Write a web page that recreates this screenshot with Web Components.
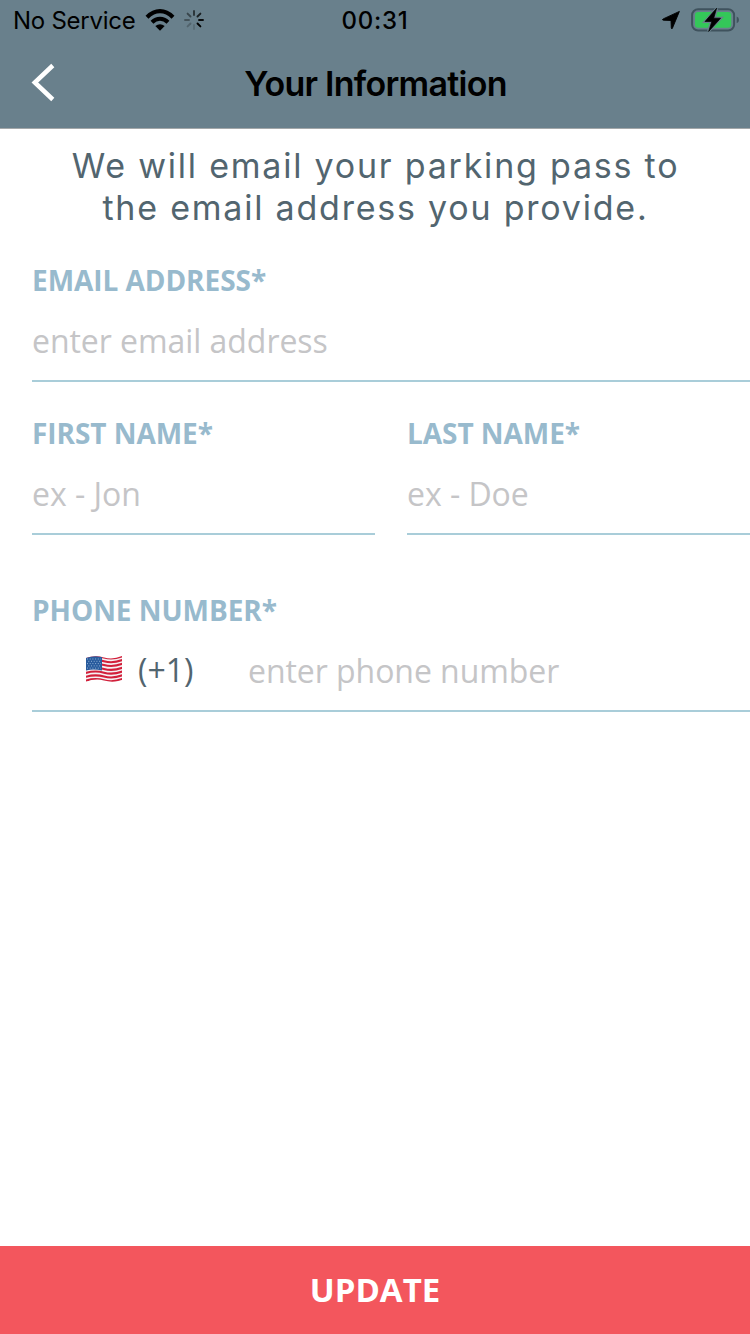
<!DOCTYPE html>
<html lang="en">
<head>
<meta charset="utf-8">
<title>Your Information</title>
<style>
html,body{margin:0;height:100%;background:#fff}
</style>
</head>
<body>
<info-screen></info-screen>
<script>
const define = (name, html) => customElements.define(name, class extends HTMLElement {
  constructor() {
    super();
    const t = document.createElement('template');
    t.innerHTML = html;
    this.attachShadow({mode: 'open'}).append(t.content.cloneNode(true));
  }
});

define('status-bar', `
<style>
:host{display:grid;grid-template-columns:1fr auto 1fr;height:40px;align-items:center;font:400 24px/42px Inter,sans-serif;color:#000}
.l,.r{display:flex;align-items:center;height:40px}
.l{padding-left:13px}
.r{justify-content:flex-end;padding-right:11px}
.s{letter-spacing:-.25px;width:132px;white-space:nowrap}
.t{font-weight:500;letter-spacing:.7px}
svg{display:block;flex:none;margin-bottom:2px}
.r svg+svg{margin-left:11px}
</style>
<div class="l"><span class="s">No Service</span>
<svg width="30" height="24" viewBox="0 0 30 24"><g fill="none" stroke="#000" stroke-width="4.1"><path d="M2 9.2Q8 3.1 15 3.1T28 9.2"/><path d="M7 14.2Q10.600 10.700 15 10.700T23 14.200"/></g><path d="M10.300 18Q15 14.300 19.700 18L15 22.800Z"/></svg>
<svg style="margin-left:9px" width="20" height="22" viewBox="-10 -11 20 22"><g stroke-width="1.900" stroke-linecap="round" stroke="#000"><path d="M0-5V-9" opacity=".6"/><path d="M3.500-3.500L6.400-6.400" opacity=".75"/><path d="M5 0H9" opacity=".9"/><path d="M3.500 3.500L6.400 6.400"/><path d="M0 5V9" opacity=".14"/><path d="M-3.500 3.500L-6.400 6.400" opacity=".22"/><path d="M-5 0H-9" opacity=".35"/><path d="M-3.500-3.500L-6.400-6.400" opacity=".45"/></g></svg>
</div>
<span class="t">00:31</span>
<div class="r">
<svg width="18" height="20" viewBox="0 -1 18 20"><path d="M17.400.4L10.500 17Q9.700 18.800 9.300 16.800L9 9.500 1.400 9.200Q-.4 8.800 1.200 7.900Z" stroke="#000" stroke-width=".9" stroke-linejoin="round"/></svg>
<svg width="48" height="26" viewBox="0 0 48 26"><rect x="1.100" y="2.200" width="42" height="21.300" rx="6" fill="none" stroke="#3f525d" stroke-width="2"/><rect x="4" y="5" width="36.200" height="15.700" rx="3.300" fill="#34c759"/><path d="M45.700 9.500Q48 10.500 48 12.900T45.700 16.300Z" fill="#3f525d"/><path d="M25.800 1.500L14.300 14.500H20.700L17.500 24 29.500 11.300H22.900Z" stroke="#69808c" stroke-width="3" fill="#69808c"/><path d="M25.600 1.200L14 14.500H20.800L17.700 24.400 29.600 11.200H22.700Z" stroke="#000" stroke-width=".7" stroke-linejoin="round"/></svg>
</div>`);

define('nav-bar', `
<style>
:host{display:grid;grid-template-columns:88px 1fr 88px;height:88px;border-bottom:1px solid #a3a7a9;box-sizing:content-box;color:#000}
svg{display:block;margin:22px 0 0 30px}
h1{margin:0;padding-left:1px;text-align:center;font:600 34px/88px Inter,sans-serif;letter-spacing:-.73px;white-space:nowrap}
</style>
<svg width="26" height="42" viewBox="0 0 26 42"><path d="M22.800 3.500L4.800 20.500 22.800 37.500" fill="none" stroke="#fff" stroke-width="4.5"/></svg>
<h1><slot></slot></h1>`);

define('form-field', `
<style>
:host{display:block;height:121px;border-bottom:2px solid #a9cdd9;font-family:"Open Sans",sans-serif;white-space:nowrap}
.label{font-weight:700;font-size:28px;line-height:38px;padding-top:2px;color:#98bacd;letter-spacing:-.05px}
.value{display:flex;align-items:center;height:44px;margin-top:19px;font-size:32px;color:#c5c5c7;letter-spacing:-.05px}
</style>
<div class="label"><slot name="label"></slot></div>
<div class="value"><slot name="prefix"></slot><span><slot></slot></span></div>`);

define('country-code', `
<style>
:host{display:flex;align-items:center;box-sizing:border-box;width:216px;padding-left:53px;color:#52656f;font-size:32px}
svg{margin:0 15px 2px 0;flex:none}
span{margin-top:-1px}
</style>
<svg width="38" height="28" viewBox="0 0 38 28"><defs><clipPath id="f"><path d="M1 3Q10 0 19 2.500T37 1V25Q28 28 19 25.500T1 27Z"/></clipPath></defs>
<g clip-path="url(#f)"><rect width="38" height="28" fill="#f5f1f3"/><g fill="none" stroke="#d21f3a" stroke-width="2.100">
<path d="M0 3Q10 0 19 2.500T38 1"/><path d="M0 6.800Q10 3.800 19 6.300T38 4.800"/><path d="M0 10.600Q10 7.600 19 10.100T38 8.600"/><path d="M0 14.400Q10 11.400 19 13.900T38 12.400"/><path d="M0 18.200Q10 15.200 19 17.700T38 16.200"/><path d="M0 22Q10 19 19 21.500T38 20"/><path d="M0 25.800Q10 22.800 19 25.300T38 23.800"/></g>
<path d="M0 2Q8 0 17 2V15.500Q8 13.300 0 15.700Z" fill="#285b9d"/><g stroke="#9dbbdc" stroke-width=".9" stroke-dasharray="1 1.700"><path d="M2 4H16M3.300 6.300H16M2 8.600H16M3.300 10.900H16M2 13.100H16"/></g></g></svg>
<span><slot></slot></span>`);

define('update-button', `
<style>
:host{display:block;height:88px;background:#f3565d}
button{display:block;width:100%;height:100%;border:0;padding:0;background:none;color:#fff;font:700 33px/44px "Open Sans",sans-serif}
</style>
<button><slot></slot></button>`);

define('info-screen', `
<style>
:host{display:flex;flex-direction:column;width:750px;height:1334px;overflow:hidden;background:#fff}
header{background:#69808c;flex:none}
main{flex:1;padding:16px 0 0 32px}
p{margin:0 31px 0 0;text-align:center;font:400 34px/42px Inter,sans-serif;color:#52656f;letter-spacing:1.78px;white-space:nowrap}
.email{margin-top:30px}
.names{display:grid;grid-template-columns:343px 343px;gap:32px;margin-top:30px}
.phone{margin-top:54px}
</style>
<header><status-bar></status-bar><nav-bar>Your Information</nav-bar></header>
<main>
<p>We will email your parking pass to<br>the email address you provide.</p>
<form-field class="email"><span slot="label">EMAIL ADDRESS*</span>enter email address</form-field>
<div class="names"><form-field><span slot="label">FIRST NAME*</span>ex - Jon</form-field><form-field><span slot="label">LAST NAME*</span>ex - Doe</form-field></div>
<form-field class="phone"><span slot="label">PHONE NUMBER*</span><country-code slot="prefix">(+1)</country-code>enter phone number</form-field>
</main>
<update-button>UPDATE</update-button>`);
</script>
</body>
</html>
